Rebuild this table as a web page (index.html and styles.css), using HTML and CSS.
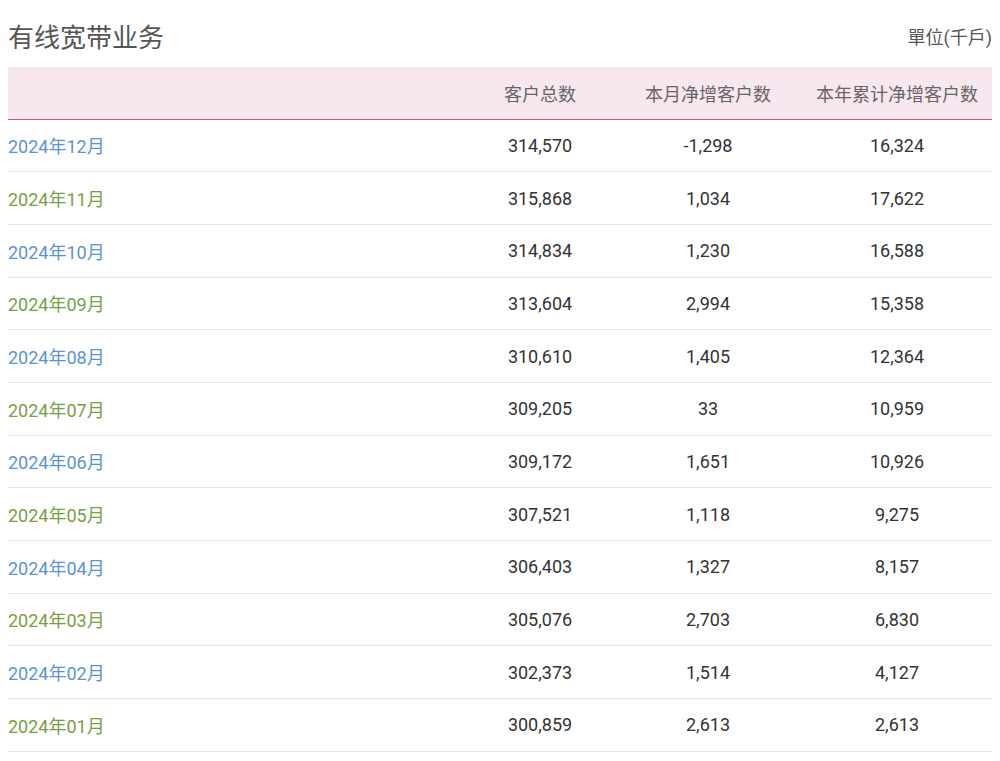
FILE: index.html
```html
<!DOCTYPE html>
<html lang="zh">
<head>
<meta charset="utf-8">
<link rel="stylesheet" href="styles.css">
</head>
<body>
<div class="page">
  <div class="top">
    <h1 class="title">有线宽带业务</h1>
    <div class="unit">單位(千戶)</div>
  </div>
  <div class="table">
    <div class="row head">
      <div class="c c1"></div>
      <div class="c">客户总数</div>
      <div class="c">本月净增客户数</div>
      <div class="c">本年累计净增客户数</div>
    </div>
    <div class="row"><div class="c c1 blue">2024年12月</div><div class="c">314,570</div><div class="c">-1,298</div><div class="c">16,324</div></div>
    <div class="row"><div class="c c1 green">2024年11月</div><div class="c">315,868</div><div class="c">1,034</div><div class="c">17,622</div></div>
    <div class="row"><div class="c c1 blue">2024年10月</div><div class="c">314,834</div><div class="c">1,230</div><div class="c">16,588</div></div>
    <div class="row"><div class="c c1 green">2024年09月</div><div class="c">313,604</div><div class="c">2,994</div><div class="c">15,358</div></div>
    <div class="row"><div class="c c1 blue">2024年08月</div><div class="c">310,610</div><div class="c">1,405</div><div class="c">12,364</div></div>
    <div class="row"><div class="c c1 green">2024年07月</div><div class="c">309,205</div><div class="c">33</div><div class="c">10,959</div></div>
    <div class="row"><div class="c c1 blue">2024年06月</div><div class="c">309,172</div><div class="c">1,651</div><div class="c">10,926</div></div>
    <div class="row"><div class="c c1 green">2024年05月</div><div class="c">307,521</div><div class="c">1,118</div><div class="c">9,275</div></div>
    <div class="row"><div class="c c1 blue">2024年04月</div><div class="c">306,403</div><div class="c">1,327</div><div class="c">8,157</div></div>
    <div class="row"><div class="c c1 green">2024年03月</div><div class="c">305,076</div><div class="c">2,703</div><div class="c">6,830</div></div>
    <div class="row"><div class="c c1 blue">2024年02月</div><div class="c">302,373</div><div class="c">1,514</div><div class="c">4,127</div></div>
    <div class="row"><div class="c c1 green">2024年01月</div><div class="c">300,859</div><div class="c">2,613</div><div class="c">2,613</div></div>
  </div>
</div>
</body>
</html>
```
FILE: styles.css
```css
html, body {
  margin: 0;
  padding: 0;
  background: #fff;
}
body {
  font-family: Roboto, "Noto Sans CJK SC", sans-serif;
  color: #333;
}
.page {
  padding: 8px;
}
.top {
  box-sizing: border-box;
  height: 59px;
  padding-bottom: 4px;
  display: flex;
  align-items: center;
  justify-content: space-between;
}
.title {
  margin: 0;
  font-size: 26px;
  font-weight: 400;
  color: #555;
}
.unit {
  font-size: 18px;
  color: #555;
}
.table {
  width: 984px;
}
.row {
  display: grid;
  grid-template-columns: 458px 148px 188px 190px;
  height: 51.67px;
  border-bottom: 1px solid #e4e4e4;
  font-size: 18px;
}
.row.head {
  background: #f7e7ef;
  border-bottom: 1px solid #c9588a;
  color: #666;
}
.c {
  display: flex;
  align-items: center;
  justify-content: center;
  white-space: nowrap;
}
.c1 {
  justify-content: flex-start;
}
.blue {
  color: #5b93d3;
}
.green {
  color: #77a042;
}
```
